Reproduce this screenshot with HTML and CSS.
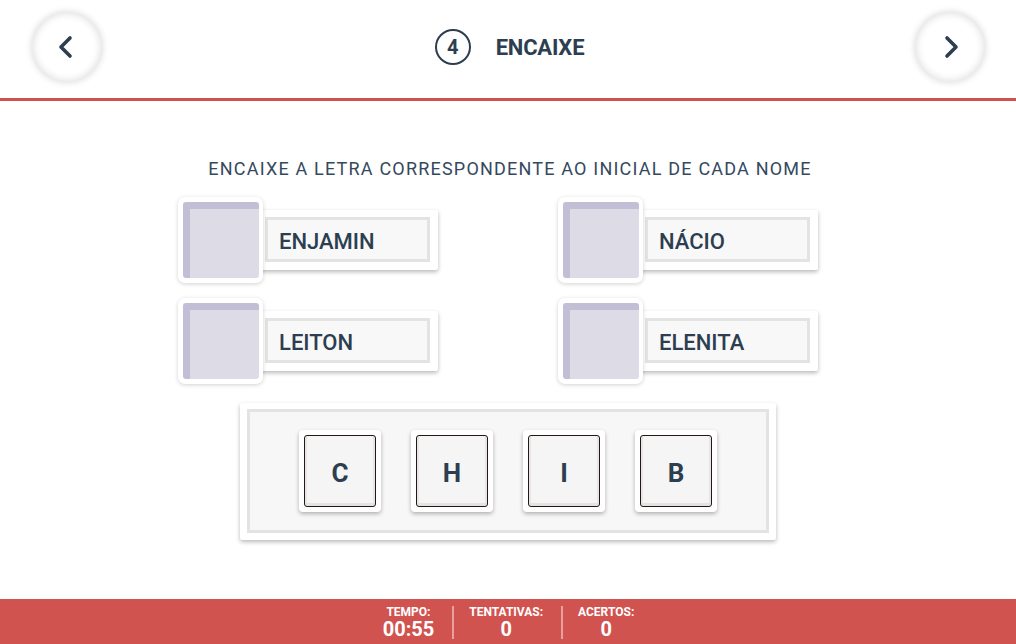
FILE: index.html
```html
<!DOCTYPE html>
<html lang="pt">
<head>
<meta charset="utf-8">
<title>Encaixe</title>
<link rel="stylesheet" href="styles.css">
</head>
<body>
<div class="app">
  <header class="topbar">
    <button class="nav-btn" aria-label="Anterior">
      <svg width="24" height="24" viewBox="0 0 24 24"><polyline points="15,3 6,12 15,21" fill="none" stroke="#2c3e50" stroke-width="3.6" stroke-linecap="round" stroke-linejoin="round"/></svg>
    </button>
    <div class="title">
      <span class="step">4</span>
      <span class="title-text">ENCAIXE</span>
    </div>
    <button class="nav-btn" aria-label="Próximo">
      <svg width="24" height="24" viewBox="0 0 24 24"><polyline points="9,3 18,12 9,21" fill="none" stroke="#2c3e50" stroke-width="3.6" stroke-linecap="round" stroke-linejoin="round"/></svg>
    </button>
  </header>

  <main class="content">
    <p class="instruction">ENCAIXE A LETRA CORRESPONDENTE AO INICIAL DE CADA NOME</p>
    <div class="names">
      <div class="item">
        <div class="slot"><div class="slot-inner"></div></div>
        <div class="card"><div class="card-inner">ENJAMIN</div></div>
      </div>
      <div class="item">
        <div class="slot"><div class="slot-inner"></div></div>
        <div class="card"><div class="card-inner">NÁCIO</div></div>
      </div>
      <div class="item">
        <div class="slot"><div class="slot-inner"></div></div>
        <div class="card"><div class="card-inner">LEITON</div></div>
      </div>
      <div class="item">
        <div class="slot"><div class="slot-inner"></div></div>
        <div class="card"><div class="card-inner">ELENITA</div></div>
      </div>
    </div>
    <div class="tray">
      <div class="tray-inner">
        <div class="tile"><div class="tile-inner">C</div></div>
        <div class="tile"><div class="tile-inner">H</div></div>
        <div class="tile"><div class="tile-inner">I</div></div>
        <div class="tile"><div class="tile-inner">B</div></div>
      </div>
    </div>
  </main>

  <footer class="statusbar">
    <div class="stat"><span class="stat-label">TEMPO:</span><span class="stat-value">00:55</span></div>
    <div class="stat"><span class="stat-label">TENTATIVAS:</span><span class="stat-value">0</span></div>
    <div class="stat"><span class="stat-label">ACERTOS:</span><span class="stat-value">0</span></div>
  </footer>
</div>
</body>
</html>
```

FILE: styles.css
```css
* { box-sizing: border-box; }
html, body { margin: 0; padding: 0; }
body {
  font-family: Roboto, "Liberation Sans", Arial, sans-serif;
  color: #2c3e50;
  background: #ffffff;
}
.app {
  width: 1016px;
  height: 644px;
  display: flex;
  flex-direction: column;
  overflow: hidden;
}

/* header */
.topbar {
  height: 101px;
  flex: 0 0 101px;
  border-bottom: 3px solid #d0524e;
  display: flex;
  align-items: center;
  justify-content: space-between;
  padding: 0 31px 4px 32px;
}
.nav-btn {
  width: 70px;
  height: 70px;
  border-radius: 50%;
  border: none;
  background: #fff;
  padding: 0;
  display: flex;
  align-items: center;
  justify-content: center;
  box-shadow: 0 0 6px 1px rgba(0, 0, 0, 0.13), inset 0 0 7px 2px rgba(0, 0, 0, 0.11);
}
.title {
  display: flex;
  align-items: center;
  gap: 25px;
  margin-left: 2px;
}
.step {
  width: 36px;
  height: 36px;
  border: 2px solid #2c3e50;
  border-radius: 50%;
  display: flex;
  align-items: center;
  justify-content: center;
  font-size: 20px;
  font-weight: 700;
  line-height: 1;
}
.title-text {
  font-size: 22px;
  font-weight: 700;
  letter-spacing: -0.2px;
}

/* content */
.content {
  flex: 1;
  display: flex;
  flex-direction: column;
  align-items: center;
  padding-top: 56px;
}
.instruction {
  margin: 0 0 0 4px;
  font-size: 18px;
  line-height: 24px;
  letter-spacing: 1.2px;
  color: #34495e;
}
.names {
  margin-top: 16px;
  width: 660px;
  display: grid;
  grid-template-columns: 280px 280px;
  column-gap: 100px;
  row-gap: 15px;
}
.item {
  display: flex;
  align-items: center;
  width: 260px;
}
.slot {
  position: relative;
  z-index: 1;
  width: 85px;
  height: 86px;
  flex: 0 0 auto;
  background: #fff;
  border-radius: 7px;
  padding: 5px 4px 5px 5px;
  box-shadow: 0 1px 4px rgba(0, 0, 0, 0.18);
}
.slot-inner {
  width: 100%;
  height: 100%;
  background: #dddbe6;
  border-top: 7px solid #c2bed6;
  border-left: 7px solid #c2bed6;
  border-radius: 3px;
}
.card {
  flex: 1;
  margin-left: -3px;
  height: 60px;
  background: #fff;
  padding: 7px 8px 8px 5px;
  border-radius: 2px;
  box-shadow: 0 2px 4px rgba(0, 0, 0, 0.28);
}
.card-inner {
  height: 100%;
  border: 3px solid #e2e3e3;
  background: #f8f8f8;
  display: flex;
  align-items: center;
  padding: 3px 0 0 11px;
  font-size: 22px;
  font-weight: 500;
  color: #2c3e50;
}

/* tray */
.tray {
  margin-top: 19px;
  width: 536px;
  height: 137px;
  background: #fff;
  padding: 6px 7px 7px 7px;
  border-radius: 2px;
  box-shadow: 0 2px 4px rgba(0, 0, 0, 0.28);
}
.tray-inner {
  height: 100%;
  border: 3px solid #e2e3e3;
  background: #f7f7f7;
  display: flex;
  align-items: center;
  justify-content: center;
  gap: 30px;
}
.tile {
  width: 82px;
  height: 82px;
  background: #fff;
  border-radius: 4px;
  padding: 5px;
  box-shadow: 0 2px 4px rgba(0, 0, 0, 0.28);
}
.tile-inner {
  width: 100%;
  height: 100%;
  border: 1px solid #241814;
  border-radius: 3px;
  background: #f5f5f5;
  box-shadow: inset 2px 0 0 #e6e6e6, inset -2px 0 0 #e6e6e6, inset 0 -3px 0 #e3e3e3;
  display: flex;
  align-items: center;
  justify-content: center;
  padding-top: 3px;
  font-size: 26px;
  font-weight: 700;
  color: #2c3e50;
}

/* footer */
.statusbar {
  flex: 0 0 45px;
  height: 45px;
  background: #d05350;
  display: flex;
  justify-content: center;
  padding: 7px 0 5px 4px;
  color: #fff;
  font-weight: 700;
}
.stat {
  display: flex;
  flex-direction: column;
  align-items: center;
  padding: 0 18px 0 15px;
}
.stat + .stat {
  border-left: 2px solid rgba(255, 255, 255, 0.45);
}
.stat-label {
  font-size: 12px;
  line-height: 13px;
}
.stat-value {
  font-size: 20px;
  line-height: 20px;
}
```
